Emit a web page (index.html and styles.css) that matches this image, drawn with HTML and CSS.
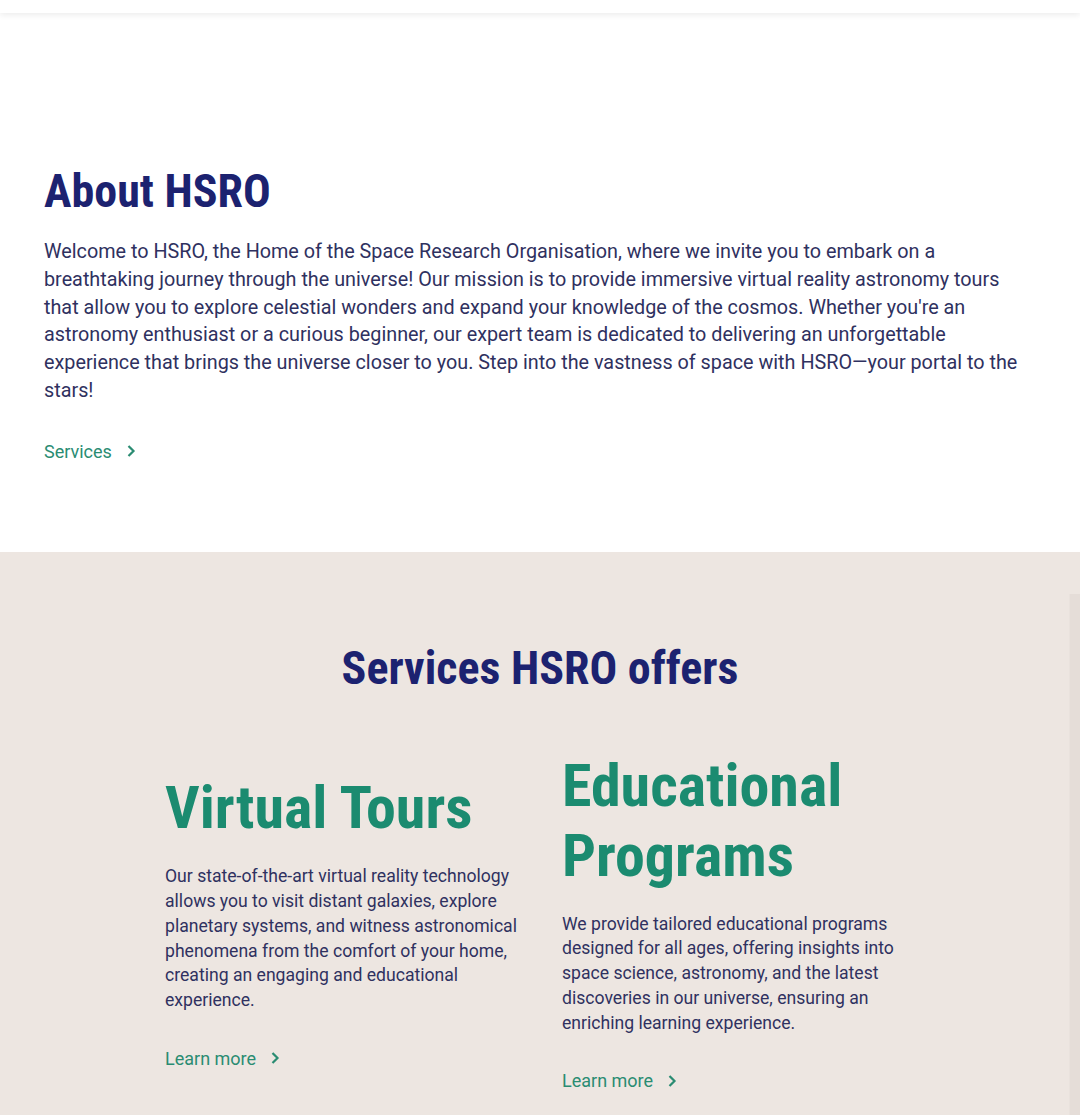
FILE: index.html
```html
<!DOCTYPE html>
<html lang="en">
<head>
<meta charset="utf-8">
<title>HSRO</title>
<link rel="stylesheet" href="styles.css">
</head>
<body>
<header class="topbar"></header>
<section class="about">
  <h1 class="title">About HSRO</h1>
  <p class="about-text">Welcome to HSRO, the Home of the Space Research Organisation, where we invite you to embark on a breathtaking journey through the universe! Our mission is to provide immersive virtual reality astronomy tours that allow you to explore celestial wonders and expand your knowledge of the cosmos. Whether you're an astronomy enthusiast or a curious beginner, our expert team is dedicated to delivering an unforgettable experience that brings the universe closer to you. Step into the vastness of space with HSRO—your portal to the stars!</p>
  <a class="link" href="#services">Services <svg class="chev" viewBox="0 0 10 14" width="10" height="14"><path d="M2.5 2 L7.5 7 L2.5 12" fill="none" stroke="currentColor" stroke-width="2.2"/></svg></a>
</section>
<section class="services" id="services">
  <div class="rail"></div>
  <h2 class="title center">Services HSRO offers</h2>
  <div class="cards">
    <div class="card">
      <h3 class="card-title">Virtual Tours</h3>
      <p class="card-text">Our state-of-the-art virtual reality technology allows you to visit distant galaxies, explore planetary systems, and witness astronomical phenomena from the comfort of your home, creating an engaging and educational experience.</p>
      <a class="link" href="#">Learn more <svg class="chev" viewBox="0 0 10 14" width="10" height="14"><path d="M2.5 2 L7.5 7 L2.5 12" fill="none" stroke="currentColor" stroke-width="2.2"/></svg></a>
    </div>
    <div class="card">
      <h3 class="card-title">Educational Programs</h3>
      <p class="card-text">We provide tailored educational programs designed for all ages, offering insights into space science, astronomy, and the latest discoveries in our universe, ensuring an enriching learning experience.</p>
      <a class="link" href="#">Learn more <svg class="chev" viewBox="0 0 10 14" width="10" height="14"><path d="M2.5 2 L7.5 7 L2.5 12" fill="none" stroke="currentColor" stroke-width="2.2"/></svg></a>
    </div>
  </div>
</section>
</body>
</html>
```
FILE: styles.css
```css
* { box-sizing: border-box; }
html, body { margin: 0; padding: 0; }
body {
  font-family: Roboto, "Noto Sans", Arial, sans-serif;
  background: #ffffff;
  color: #2f3160;
}
.topbar {
  height: 13px;
  background: #ffffff;
  box-shadow: 0 2px 6px rgba(0,0,0,0.08);
  position: relative;
  z-index: 2;
}
.about {
  padding: 150px 44px 90px 44px;
}
.title {
  font-family: "Roboto Condensed", Roboto, sans-serif;
  font-stretch: condensed;
  font-weight: 700;
  font-size: 46px;
  line-height: 56px;
  color: #1c2270;
  margin: 0 0 19px 0;
}
.about-text {
  font-size: 19.8px;
  line-height: 27.8px;
  margin: 0 0 36px 0;
  color: #2f3160;
  max-width: 992px;
}
.link {
  display: inline-flex;
  align-items: center;
  gap: 14px;
  font-size: 18px;
  color: #2a8c72;
  text-decoration: none;
}
.services {
  position: relative;
  background: #ede6e1;
  padding: 88px 0 60px 0;
  min-height: 600px;
}
.rail {
  position: absolute;
  right: 0;
  top: 42px;
  bottom: 0;
  width: 11px;
  background: #e5ddd8;
  border-left: 1px solid #e9e2dd;
}
.title.center { text-align: center; margin-bottom: 55px; }
.cards {
  width: 750px;
  margin: 0 auto;
  display: grid;
  grid-template-columns: 357px 357px;
  column-gap: 40px;
  align-items: center;
}
.card-title {
  font-family: "Roboto Condensed", Roboto, sans-serif;
  font-stretch: condensed;
  font-weight: 700;
  font-size: 60px;
  line-height: 70px;
  color: #1b8b70;
  margin: 0 0 21px 0;
}
.card-text {
  font-size: 17.6px;
  line-height: 24.7px;
  margin: 0 0 35px 0;
  color: #2f3160;
}
```
